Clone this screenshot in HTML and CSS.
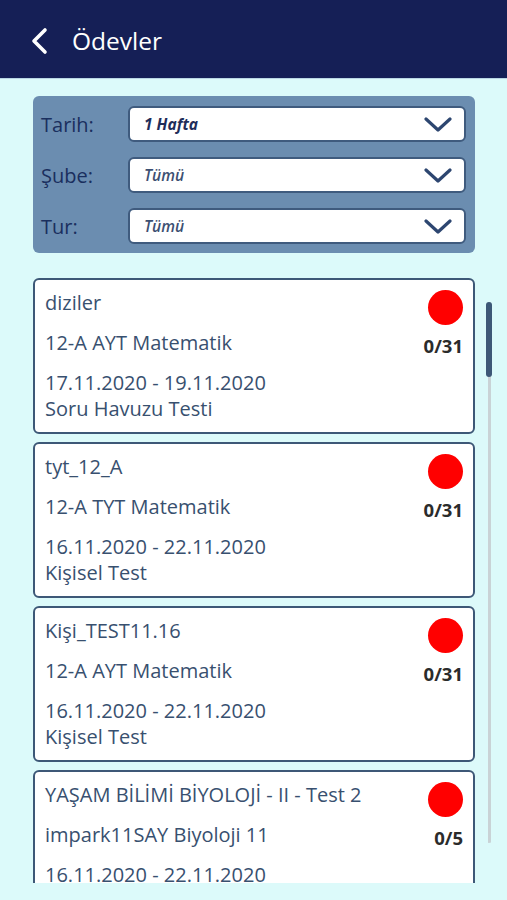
FILE: index.html
```html
<!DOCTYPE html>
<html lang="tr">
<head>
  <meta charset="UTF-8">
  <title>Ödevler</title>
  <link rel="stylesheet" href="styles.css">
</head>
<body>

  <div class="header">
    <svg class="back" width="20" height="30" viewBox="0 0 20 30">
      <polyline points="15,4 4,15 15,26" fill="none" stroke="#fff" stroke-width="3.6" stroke-linecap="round" stroke-linejoin="round"/>
    </svg>
    <span class="title">Ödevler</span>
  </div>

  <!-- Filters -->
  <div class="filters">
    <div class="filter-row">
      <span class="filter-label">Tarih:</span>
      <div class="select">
        <span class="select-value strong">1 Hafta</span>
        <svg class="chev" width="28" height="18" viewBox="0 0 28 18">
          <polyline points="2,3 14,14 26,3" fill="none" stroke="#2d4670" stroke-width="3.2" stroke-linecap="round" stroke-linejoin="round"/>
        </svg>
      </div>
    </div>
    <div class="filter-row">
      <span class="filter-label">Şube:</span>
      <div class="select">
        <span class="select-value">Tümü</span>
        <svg class="chev" width="28" height="18" viewBox="0 0 28 18">
          <polyline points="2,3 14,14 26,3" fill="none" stroke="#2d4670" stroke-width="3.2" stroke-linecap="round" stroke-linejoin="round"/>
        </svg>
      </div>
    </div>
    <div class="filter-row">
      <span class="filter-label">Tur:</span>
      <div class="select">
        <span class="select-value">Tümü</span>
        <svg class="chev" width="28" height="18" viewBox="0 0 28 18">
          <polyline points="2,3 14,14 26,3" fill="none" stroke="#2d4670" stroke-width="3.2" stroke-linecap="round" stroke-linejoin="round"/>
        </svg>
      </div>
    </div>
  </div>

  <!-- Homework list -->
  <div class="list-wrap">
    <div class="list">
      <div class="card">
        <div class="card-info">
          <div class="line">diziler</div>
          <div class="line gap">12-A AYT Matematik</div>
          <div class="line gap">17.11.2020 - 19.11.2020</div>
          <div class="line">Soru Havuzu Testi</div>
        </div>
        <div class="card-status">
          <span class="dot"></span>
          <span class="count">0/31</span>
        </div>
      </div>

      <div class="card">
        <div class="card-info">
          <div class="line">tyt_12_A</div>
          <div class="line gap">12-A TYT Matematik</div>
          <div class="line gap">16.11.2020 - 22.11.2020</div>
          <div class="line">Kişisel Test</div>
        </div>
        <div class="card-status">
          <span class="dot"></span>
          <span class="count">0/31</span>
        </div>
      </div>

      <div class="card">
        <div class="card-info">
          <div class="line">Kişi_TEST11.16</div>
          <div class="line gap">12-A AYT Matematik</div>
          <div class="line gap">16.11.2020 - 22.11.2020</div>
          <div class="line">Kişisel Test</div>
        </div>
        <div class="card-status">
          <span class="dot"></span>
          <span class="count">0/31</span>
        </div>
      </div>

      <div class="card">
        <div class="card-info">
          <div class="line">YAŞAM BİLİMİ BİYOLOJİ - II - Test 2</div>
          <div class="line gap">impark11SAY Biyoloji 11</div>
          <div class="line gap">16.11.2020 - 22.11.2020</div>
          <div class="line">Kişisel Test</div>
        </div>
        <div class="card-status">
          <span class="dot"></span>
          <span class="count">0/5</span>
        </div>
      </div>
    </div>

    <div class="scrollbar">
      <div class="thumb"></div>
    </div>
  </div>

</body>
</html>
```

FILE: styles.css
```css
body {
  font-family: 'Open Sans', 'Noto Sans', sans-serif;
  background: #dcfafa;
  margin: 0;
}

.header {
  height: 79px;
  background: #151f56;
  display: flex;
  align-items: center;
  padding-left: 30px;
  box-sizing: border-box;
  border-bottom: 1px solid #b9d6e4;
}

.back {
  margin-top: 4px;
}

.title {
  color: white;
  font-size: 24.5px;
  margin-left: 22px;
  margin-top: 2px;
}

.filters {
  margin: 17px 32px 0 33px;
  background: #6b8db0;
  border-radius: 6px;
  padding: 10px 9px 9px 8px;
  display: flex;
  flex-direction: column;
  gap: 15px;
}

.filter-row {
  display: flex;
  align-items: center;
}

.filter-label {
  width: 87px;
  font-size: 20px;
  color: #1a2f5e;
}

.select {
  flex: 1;
  height: 36px;
  box-sizing: border-box;
  background: white;
  border: 2px solid #3f5b7e;
  border-radius: 6px;
  display: flex;
  align-items: center;
  justify-content: space-between;
  padding: 0 12px 0 14px;
}

.select-value {
  font-size: 15.5px;
  font-style: italic;
  font-weight: 600;
  color: #3d5072;
}

.select-value.strong {
  font-size: 15.5px;
  font-weight: 700;
  color: #1f2d5a;
}

.chev {
  margin-top: 1px;
}

.list-wrap {
  margin: 25px 0 0 33px;
  height: 605px;
  overflow: hidden;
  display: flex;
  gap: 11px;
}

.list {
  width: 442px;
  display: flex;
  flex-direction: column;
  gap: 8px;
}

.card {
  flex-shrink: 0;
  background: white;
  border: 2px solid #3d5877;
  border-radius: 6px;
  padding: 10px 10px 10px 10px;
  display: flex;
  justify-content: space-between;
}

.card-info {
  color: #38506f;
  font-size: 20px;
}

.line {
  line-height: 26px;
}

.line.gap {
  margin-top: 14px;
}

.card-status {
  display: flex;
  flex-direction: column;
  align-items: flex-end;
}

.dot {
  width: 35px;
  height: 35px;
  border-radius: 50%;
  background: #ff0000;
}

.count {
  font-size: 18.5px;
  font-weight: 700;
  color: #2b2b2b;
  margin-top: 8px;
}

.scrollbar {
  margin-top: 24px;
  width: 6px;
  height: 541px;
  display: flex;
  flex-direction: column;
  align-items: center;
  background: linear-gradient(#c9d3d6, #c9d3d6) center / 3px 100% no-repeat;
  border-radius: 3px;
}

.thumb {
  width: 6px;
  height: 75px;
  border-radius: 3px;
  background: #3d5877;
}
```
